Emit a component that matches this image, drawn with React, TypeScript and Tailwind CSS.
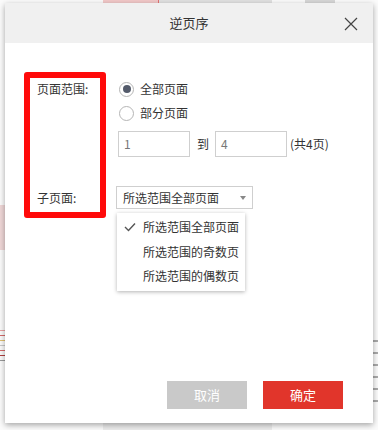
import React from "react";

const font = {
  fontFamily: '"Noto Sans CJK SC", "Noto Sans", "Liberation Sans", sans-serif',
};

function Radio({ checked }: { checked: boolean }) {
  return (
    <span className="flex h-[15px] w-[15px] items-center justify-center rounded-full border border-[#b5b5b5] bg-white">
      {checked && <span className="h-[8px] w-[8px] rounded-full bg-[#545b6b]" />}
    </span>
  );
}

export default function App() {
  return (
    <div
      className="relative h-[430px] w-[378px] overflow-hidden bg-[#fbfbfb]"
      style={font}
    >
      {/* background page hints */}
      <div className="absolute left-0 top-0 flex h-[3px] w-full">
        <div className="ml-[103px] h-full w-[55px] bg-[#f3c9c9]" />
        <div className="h-full w-[1px] bg-[#e57373]" />
        <div className="h-full w-[113px] bg-[#e2e2e2]" />
        <div className="ml-[33px] h-full w-[30px] bg-[#d8d8d8]" />
      </div>
      <div className="absolute left-[103px] top-[423px] h-[7px] w-[169px] bg-[#ececec]" />
      <div className="absolute left-0 top-[205px] h-[45px] w-[5px] bg-[#efd7d7]" />
      <div className="absolute left-0 top-[330px] flex w-[5px] flex-col gap-[4px]">
        <div className="h-[1px] w-full bg-[#e8a0a0]" />
        <div className="h-[1px] w-full bg-[#d46a6a]" />
        <div className="h-[1px] w-full bg-[#e0c070]" />
        <div className="h-[1px] w-full bg-[#c8c8c8]" />
        <div className="h-[1px] w-full bg-[#d46a6a]" />
        <div className="h-[1px] w-full bg-[#b04040]" />
        <div className="h-[1px] w-full bg-[#999]" />
      </div>
      <div className="absolute left-[373px] top-[340px] flex w-[5px] flex-col gap-[10px]">
        <div className="h-[2px] w-full bg-[#aaa]" />
        <div className="h-[2px] w-full bg-[#aaa]" />
        <div className="h-[2px] w-full bg-[#aaa]" />
        <div className="h-[2px] w-full bg-[#aaa]" />
        <div className="h-[2px] w-full bg-[#aaa]" />
        <div className="h-[2px] w-full bg-[#aaa]" />
      </div>

      {/* dialog */}
      <div className="absolute left-[5px] top-[3px] flex h-[420px] w-[368px] flex-col bg-white shadow-[0_2px_6px_rgba(0,0,0,0.35)]">
        <div className="relative flex h-[40px] items-center justify-center bg-[#f0f0f0]">
          <span className="text-[13px] text-[#333]">逆页序</span>
          <svg
            className="absolute right-[15px] top-[14px]"
            width="14"
            height="14"
            viewBox="0 0 14 14"
          >
            <path d="M1 1L13 13M13 1L1 13" stroke="#444" strokeWidth="1.2" fill="none" />
          </svg>
        </div>

        <div className="relative flex flex-1 flex-col pl-[32px] pt-[36px] text-[12px] text-[#333]">
          {/* red annotation box */}
          <div className="pointer-events-none absolute left-[19px] top-[29px] h-[146px] w-[82px] rounded-[3px] border-[6px] border-[#ff0a0a]" />

          <div className="flex h-[20px] items-center">
            <span className="w-[79px]">页面范围:</span>
            <span className="ml-[3px] flex items-center gap-[6px]">
              <Radio checked />
              <span>全部页面</span>
            </span>
          </div>
          <div className="mt-[4px] flex h-[20px] items-center">
            <span className="w-[79px]" />
            <span className="ml-[3px] flex items-center gap-[6px]">
              <Radio checked={false} />
              <span>部分页面</span>
            </span>
          </div>
          <div className="mt-[8px] flex h-[26px] items-center">
            <span className="w-[79px]" />
            <div className="ml-[2px] flex h-full w-[72px] items-center border border-[#cfcfcf] pl-[5px] text-[#777]">
              1
            </div>
            <span className="ml-[7px]">到</span>
            <div className="ml-[6px] flex h-full w-[72px] items-center border border-[#cfcfcf] pl-[5px] text-[#777]">
              4
            </div>
            <span className="ml-[3px]">(共4页)</span>
          </div>
          <div className="mt-[29px] flex h-[23px] items-center">
            <span className="w-[79px]">子页面:</span>
            <div className="flex h-full w-[137px] items-center justify-between border border-[#cfcfcf] pl-[6px] pr-[6px]">
              <span>所选范围全部页面</span>
              <svg width="6" height="4" viewBox="0 0 6 4">
                <path d="M0 0H6L3 4Z" fill="#888" />
              </svg>
            </div>
          </div>

          {/* dropdown menu */}
          <div className="absolute left-[112px] top-[170px] flex w-[128px] flex-col bg-white py-[2px] shadow-[0_1px_4px_rgba(0,0,0,0.3)]">
            <div className="flex h-[24.5px] items-center">
              <svg className="ml-[7px]" width="12" height="10" viewBox="0 0 12 10">
                <path d="M1 5L4.5 8.5L11 1.5" stroke="#555" strokeWidth="1.4" fill="none" />
              </svg>
              <span className="ml-[7px]">所选范围全部页面</span>
            </div>
            <div className="flex h-[24.5px] items-center pl-[26px]">所选范围的奇数页</div>
            <div className="flex h-[24.5px] items-center pl-[26px]">所选范围的偶数页</div>
          </div>

          <div className="mt-auto mb-[14px] mr-[30px] flex justify-end gap-[16px]">
            <button className="h-[28px] w-[80px] bg-[#c9c9c9] text-[13px] text-white">取消</button>
            <button className="h-[28px] w-[80px] bg-[#e1352b] text-[13px] text-white">确定</button>
          </div>
        </div>
      </div>
    </div>
  );
}
